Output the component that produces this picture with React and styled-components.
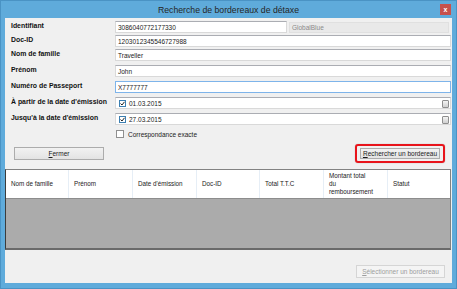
import React from "react";
import styled, { createGlobalStyle } from "styled-components";

const Global = createGlobalStyle`
  html, body { margin: 0; padding: 0; background: #5fabdb; }
  body { font-family: "Liberation Sans", Arial, sans-serif; }
`;

const Win = styled.div`
  width: 457px;
  height: 289px;
  box-sizing: border-box;
  background: #5fabdb;
  border: 1px solid #4a93c4;
  display: flex;
  flex-direction: column;
`;

const TitleBar = styled.div`
  height: 17px;
  position: relative;
  display: flex;
  align-items: center;
  justify-content: center;
  font-size: 8.7px;
  color: #262626;
`;

const Close = styled.div`
  position: absolute;
  right: 5px;
  top: 3px;
  width: 11px;
  height: 11px;
  background: #c7514c;
  color: #fff;
  font-size: 7px;
  font-weight: bold;
  display: flex;
  align-items: center;
  justify-content: center;
  line-height: 1;
`;

const Client = styled.div`
  flex: 1;
  margin: 0 4px 5px 4px;
  background: #f0f0f0;
  display: flex;
  flex-direction: column;
  position: relative;
`;

const Form = styled.div`
  display: flex;
  flex-direction: column;
  padding: 3px 1px 0 6px;
`;

const Row = styled.div`
  display: grid;
  grid-template-columns: 104px 1fr;
  align-items: start;
  margin-top: ${(p) => p.$mt || 0}px;
`;

const Label = styled.div`
  font-size: 6.9px;
  font-weight: bold;
  color: #111;
  line-height: 9px;
  white-space: nowrap;
`;

const Fields = styled.div`
  display: flex;
  gap: 2px;
`;

const Input = styled.div`
  box-sizing: border-box;
  height: ${(p) => p.$h || 12}px;
  flex: ${(p) => (p.$w ? "none" : 1)};
  width: ${(p) => (p.$w ? p.$w + "px" : "auto")};
  margin-top: ${(p) => p.$mt || 0}px;
  margin-right: ${(p) => p.$mr || 0}px;
  background: ${(p) => (p.$ro ? "#e9e9e9" : "#fff")};
  border: 1px solid ${(p) => (p.$ro ? "#e0e0e0" : p.$focus ? "#7eb4ea" : "#d9d9d9")};
  border-top-color: ${(p) => (p.$ro ? "#e0e0e0" : p.$focus ? "#7eb4ea" : "#abadb3")};
  font-size: 6.5px;
  color: ${(p) => (p.$ro ? "#8a8a8a" : "#1a1a1a")};
  display: flex;
  align-items: center;
  padding-left: ${(p) => p.$pl || 2}px;
  gap: 3px;
  position: relative;
`;

const Check = styled.span`
  box-sizing: border-box;
  width: ${(p) => p.$size || 7}px;
  height: ${(p) => p.$size || 7}px;
  border: 1px solid ${(p) => (p.$on ? "#3c7fb1" : "#8f8f8f")};
  background: #fff;
  display: inline-flex;
  align-items: center;
  justify-content: center;
  flex: none;
`;

const CalIcon = styled.span`
  position: absolute;
  right: 1px;
  top: 2px;
  width: 5px;
  height: 6px;
  border: 1px solid #8e8e8e;
  border-radius: 1px;
  background: linear-gradient(#f4f4f4, #cfcfcf);
`;

const CheckRow = styled.label`
  display: flex;
  align-items: center;
  gap: 4px;
  font-size: 6.5px;
  color: #222;
  margin-left: 104px;
  margin-top: 5px;
  padding-left: 1px;
`;

const ButtonsRow = styled.div`
  display: flex;
  justify-content: space-between;
  align-items: center;
  padding: 6px 7px 0 9px;
`;

const Btn = styled.div`
  box-sizing: border-box;
  width: ${(p) => p.$w}px;
  height: ${(p) => p.$h || 13}px;
  border: 1px solid ${(p) => (p.$dis ? "#d5d5d5" : "#acacac")};
  background: ${(p) => (p.$dis ? "#f4f4f4" : "linear-gradient(#f2f2f2, #e3e3e3)")};
  font-size: 6.5px;
  color: ${(p) => (p.$dis ? "#9d9d9d" : "#1a1a1a")};
  display: flex;
  align-items: center;
  justify-content: center;
  u { text-decoration: underline; }
`;

const Highlight = styled.div`
  border: 2px solid #e8141b;
  border-radius: 3px;
  padding: 2px 3px;
  box-shadow: 0 0 1px rgba(0,0,0,0.4);
`;

const Table = styled.div`
  margin-top: 6px;
  margin-right: 1px;
  height: 81px;
  box-sizing: border-box;
  border: 1px solid #828282;
  border-left-color: #3c3c3c;
  border-bottom: 2px solid #6a6a6a;
  display: flex;
  flex-direction: column;
  background: #ababab;
`;

const Header = styled.div`
  display: grid;
  grid-template-columns: 63px 64px 64px 63px 64px 64px 1fr;
  height: 28px;
  background: #fff;
  border-bottom: 1px solid #8d8d8d;
`;

const Col = styled.div`
  font-size: 6.3px;
  color: #222;
  padding-left: 5px;
  display: flex;
  align-items: center;
  line-height: 8px;
  border-right: ${(p) => (p.$last ? "none" : "1px solid #e6eef6")};
`;

const Footer = styled.div`
  flex: 1;
  display: flex;
  justify-content: flex-end;
  align-items: flex-start;
  padding: 15px 7px 0 0;
`;

const Tick = () => (
  <svg width="5" height="5" viewBox="0 0 5 5">
    <path d="M0.5 2.5 L2 4 L4.5 0.8" stroke="#222" strokeWidth="1" fill="none" />
  </svg>
);

export default function App() {
  return (
    <>
      <Global />
      <Win>
        <TitleBar>
          Recherche de bordereaux de détaxe
          <Close>x</Close>
        </TitleBar>
        <Client>
          <Form>
            <Row>
              <Label>Identifiant</Label>
              <Fields>
                <Input $w={172}>3086040772177330</Input>
                <Input $ro $h={11} $mt={1} $mr={2}>GlobalBlue</Input>
              </Fields>
            </Row>
            <Row $mt={2}>
              <Label>Doc-ID</Label>
              <Input>1203012345546727988</Input>
            </Row>
            <Row $mt={2}>
              <Label>Nom de famille</Label>
              <Input>Traveller</Input>
            </Row>
            <Row $mt={4}>
              <Label>Prénom</Label>
              <Input>John</Input>
            </Row>
            <Row $mt={4}>
              <Label>Numéro de Passeport</Label>
              <Input $focus>X7777777</Input>
            </Row>
            <Row $mt={4}>
              <Label>À partir de la date d'émission</Label>
              <Input $pl={3}>
                <Check $on><Tick /></Check>
                01.03.2015
                <CalIcon />
              </Input>
            </Row>
            <Row $mt={4}>
              <Label>Jusqu'à la date d'émission</Label>
              <Input $pl={3}>
                <Check $on><Tick /></Check>
                27.03.2015
                <CalIcon />
              </Input>
            </Row>
            <CheckRow>
              <Check $size={8} />
              Correspondance exacte
            </CheckRow>
          </Form>
          <ButtonsRow>
            <Btn $w={90}>
              <span><u>F</u>ermer</span>
            </Btn>
            <Highlight>
              <Btn $w={80} $h={11}>
                <span><u>R</u>echercher un bordereau</span>
              </Btn>
            </Highlight>
          </ButtonsRow>
          <Table>
            <Header>
              <Col>Nom de famille</Col>
              <Col>Prénom</Col>
              <Col>Date d'émission</Col>
              <Col>Doc-ID</Col>
              <Col>Total T.T.C</Col>
              <Col>Montant total<br />du<br />remboursement</Col>
              <Col $last>Statut</Col>
            </Header>
          </Table>
          <Footer>
            <Btn $w={89} $dis>
              <span><u>S</u>électionner un bordereau</span>
            </Btn>
          </Footer>
        </Client>
      </Win>
    </>
  );
}
